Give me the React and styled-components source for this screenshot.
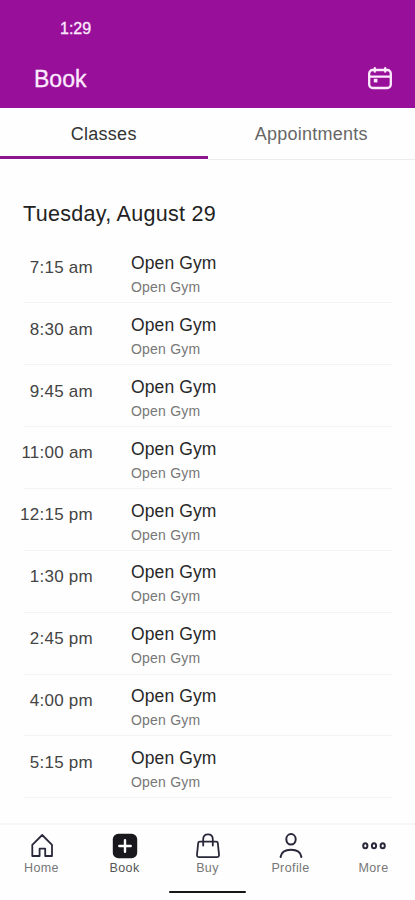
import { useState } from "react";
import styled, { createGlobalStyle } from "styled-components";

const times = [
	"7:15 am",
	"8:30 am",
	"9:45 am",
	"11:00 am",
	"12:15 pm",
	"1:30 pm",
	"2:45 pm",
	"4:00 pm",
	"5:15 pm",
];

const navItems = [
	{ label: "Home", Icon: HomeIcon },
	{ label: "Book", Icon: BookIcon },
	{ label: "Buy", Icon: BagIcon },
	{ label: "Profile", Icon: ProfileIcon },
	{ label: "More", Icon: MoreIcon },
];

export default function App() {
	const [tab, setTab] = useState("Classes");

	return (
		<Screen>
			<GlobalStyle />
			<Header>
				<Clock>1:29</Clock>
				<TitleBar>
					<Title>Book</Title>
					<CalendarIcon />
				</TitleBar>
			</Header>
			<Tabs>
				{["Classes", "Appointments"].map(name => (
					<Tab key={name} $active={tab === name} onClick={() => setTab(name)}>
						{name}
					</Tab>
				))}
			</Tabs>
			<Schedule>
				<DateHeading>Tuesday, August 29</DateHeading>
				{times.map(time => (
					<ClassRow key={time}>
						<Time>{time}</Time>
						<ClassInfo>
							<ClassName>Open Gym</ClassName>
							<ClassType>Open Gym</ClassType>
						</ClassInfo>
					</ClassRow>
				))}
			</Schedule>
			<BottomNav>
				{navItems.map(({ label, Icon }) => (
					<NavItem key={label} $active={label === "Book"}>
						<Icon />
						<span>{label}</span>
					</NavItem>
				))}
			</BottomNav>
			<Footer>
				<HomeIndicator />
			</Footer>
		</Screen>
	);
}

function CalendarIcon() {
	return (
		<Glyph stroke="#fdeaff" strokeWidth="2.3">
			<rect x="2.2" y="4" width="21.6" height="18" rx="3.4" />
			<path d="M2.5 10.7H23.5M7.8 2.2V5.7M18.2 2.2V5.7" />
			<rect x="6.8" y="12.8" width="3.6" height="3.6" fill="#fdeaff" stroke="none" />
		</Glyph>
	);
}

function HomeIcon() {
	return (
		<Glyph strokeWidth="1.8">
			<path d="M3.3 11.8L13.2 2L23 11.8V23H16.2V15.6H10.6V23H3.3Z" />
		</Glyph>
	);
}

function BookIcon() {
	return (
		<Glyph stroke="#fff" strokeWidth="2.4">
			<rect x="0.8" y="0.8" width="24.4" height="24.4" rx="5.5" fill="#19191d" stroke="none" />
			<path d="M13 7.3V18.7M7.3 13H18.7" />
		</Glyph>
	);
}

function BagIcon() {
	return (
		<Glyph strokeWidth="1.8">
			<path d="M4.8 8.6H21.2Q22.6 8.6 22.8 10L24 21.3Q24.3 24.2 21.8 24.2H4.2Q1.7 24.2 2 21.3L3.2 10Q3.4 8.6 4.8 8.6Z" />
			<path d="M8.2 12.5V6.2Q8.2 1.3 13 1.3Q17.8 1.3 17.8 6.2V12.5" />
		</Glyph>
	);
}

function ProfileIcon() {
	return (
		<Glyph strokeWidth="2">
			<ellipse cx="13" cy="6.3" rx="4.7" ry="5.2" />
			<path d="M2.6 24C3.4 19 6.5 16.8 13 16.8S22.6 19 23.4 24" />
		</Glyph>
	);
}

function MoreIcon() {
	return (
		<Glyph strokeWidth="2">
			<ellipse cx="4.3" cy="12.8" rx="2.1" ry="2.5" />
			<ellipse cx="13" cy="12.8" rx="2.1" ry="2.5" />
			<ellipse cx="21.7" cy="12.8" rx="2.1" ry="2.5" />
		</Glyph>
	);
}

const GlobalStyle = createGlobalStyle`
	* {
		box-sizing: border-box;
	}
	body {
		margin: 0;
		background: #fefefe;
	}
`;

const Glyph = styled.svg.attrs(({ stroke, strokeWidth }) => ({
	viewBox: "0 0 26 26",
	fill: "none",
	stroke: stroke || "#29283a",
	strokeWidth: strokeWidth || "1.6",
	strokeLinecap: "round",
	strokeLinejoin: "round",
}))`
	display: block;
	width: 26px;
	height: 26px;
	flex-shrink: 0;
`;

const Screen = styled.div`
	display: flex;
	flex-direction: column;
	width: 100%;
	height: 900px;
	overflow: hidden;
	font-family: "Liberation Sans", Arial, sans-serif;
	background: #fefefe;
`;

const Header = styled.header`
	height: 108px;
	padding-top: 19px;
	background: #98109a;
	color: #fdeaff;
`;

const Clock = styled.div`
	padding-left: 60px;
	font-size: 16px;
	line-height: 20px;
	-webkit-text-stroke: 0.3px;
`;

const TitleBar = styled.div`
	display: flex;
	align-items: center;
	justify-content: space-between;
	height: 50px;
	margin-top: 15px;
	padding: 0 22px 0 34px;
`;

const Title = styled.h1`
	margin: 0;
	font-size: 23px;
	font-weight: normal;
	-webkit-text-stroke: 0.3px;
`;

const Tabs = styled.div`
	display: flex;
	height: 52px;
`;

const Tab = styled.button`
	flex: 1;
	border: none;
	border-bottom: ${({ $active }) =>
		$active ? "3px solid #8d168f" : "1px solid #ececec"};
	margin-bottom: ${({ $active }) => ($active ? "1px" : "0")};
	padding: ${({ $active }) => ($active ? "4px 0 0" : "4px 0 3px")};
	background: none;
	color: ${({ $active }) => ($active ? "#333" : "#666")};
	font-family: inherit;
	font-size: 18px;
	letter-spacing: 0.25px;
	cursor: pointer;
`;

const Schedule = styled.main`
	flex: 1;
	padding: 42px 23px 0;
`;

const DateHeading = styled.h2`
	margin: 0;
	height: 39.3px;
	color: #222;
	font-size: 21.5px;
	font-weight: normal;
	line-height: 24px;
	letter-spacing: 0.3px;
`;

const ClassRow = styled.div`
	display: flex;
	height: 61.9px;
	border-bottom: 1px solid #f4f4f4;
`;

const Time = styled.div`
	width: 75px;
	margin-left: -5px;
	padding-top: 16.5px;
	color: #444;
	font-size: 17px;
	line-height: 20px;
	letter-spacing: 0.25px;
	text-align: right;
	white-space: nowrap;
`;

const ClassInfo = styled.div`
	margin-left: 38px;
	padding-top: 11.7px;
`;

const ClassName = styled.div`
	color: #282828;
	font-size: 17.5px;
	line-height: 20px;
	letter-spacing: 0.1px;
`;

const ClassType = styled.div`
	margin-top: 5px;
	color: #777;
	font-size: 14px;
	line-height: 18px;
	letter-spacing: 0.2px;
`;

const BottomNav = styled.nav`
	display: flex;
	height: 58px;
	border-top: 2px solid #f6f6f6;
	padding-top: 8px;
`;

const NavItem = styled.div`
	display: flex;
	flex: 1;
	flex-direction: column;
	align-items: center;
	color: ${({ $active }) => ($active ? "#555" : "#777")};
	font-size: 12.5px;
	line-height: 18px;
	letter-spacing: 0.4px;
`;

const Footer = styled.div`
	display: flex;
	justify-content: center;
	height: 19px;
	padding-top: 10px;
`;

const HomeIndicator = styled.div`
	width: 77px;
	height: 2px;
	border-radius: 1px;
	background: #161616;
`;
